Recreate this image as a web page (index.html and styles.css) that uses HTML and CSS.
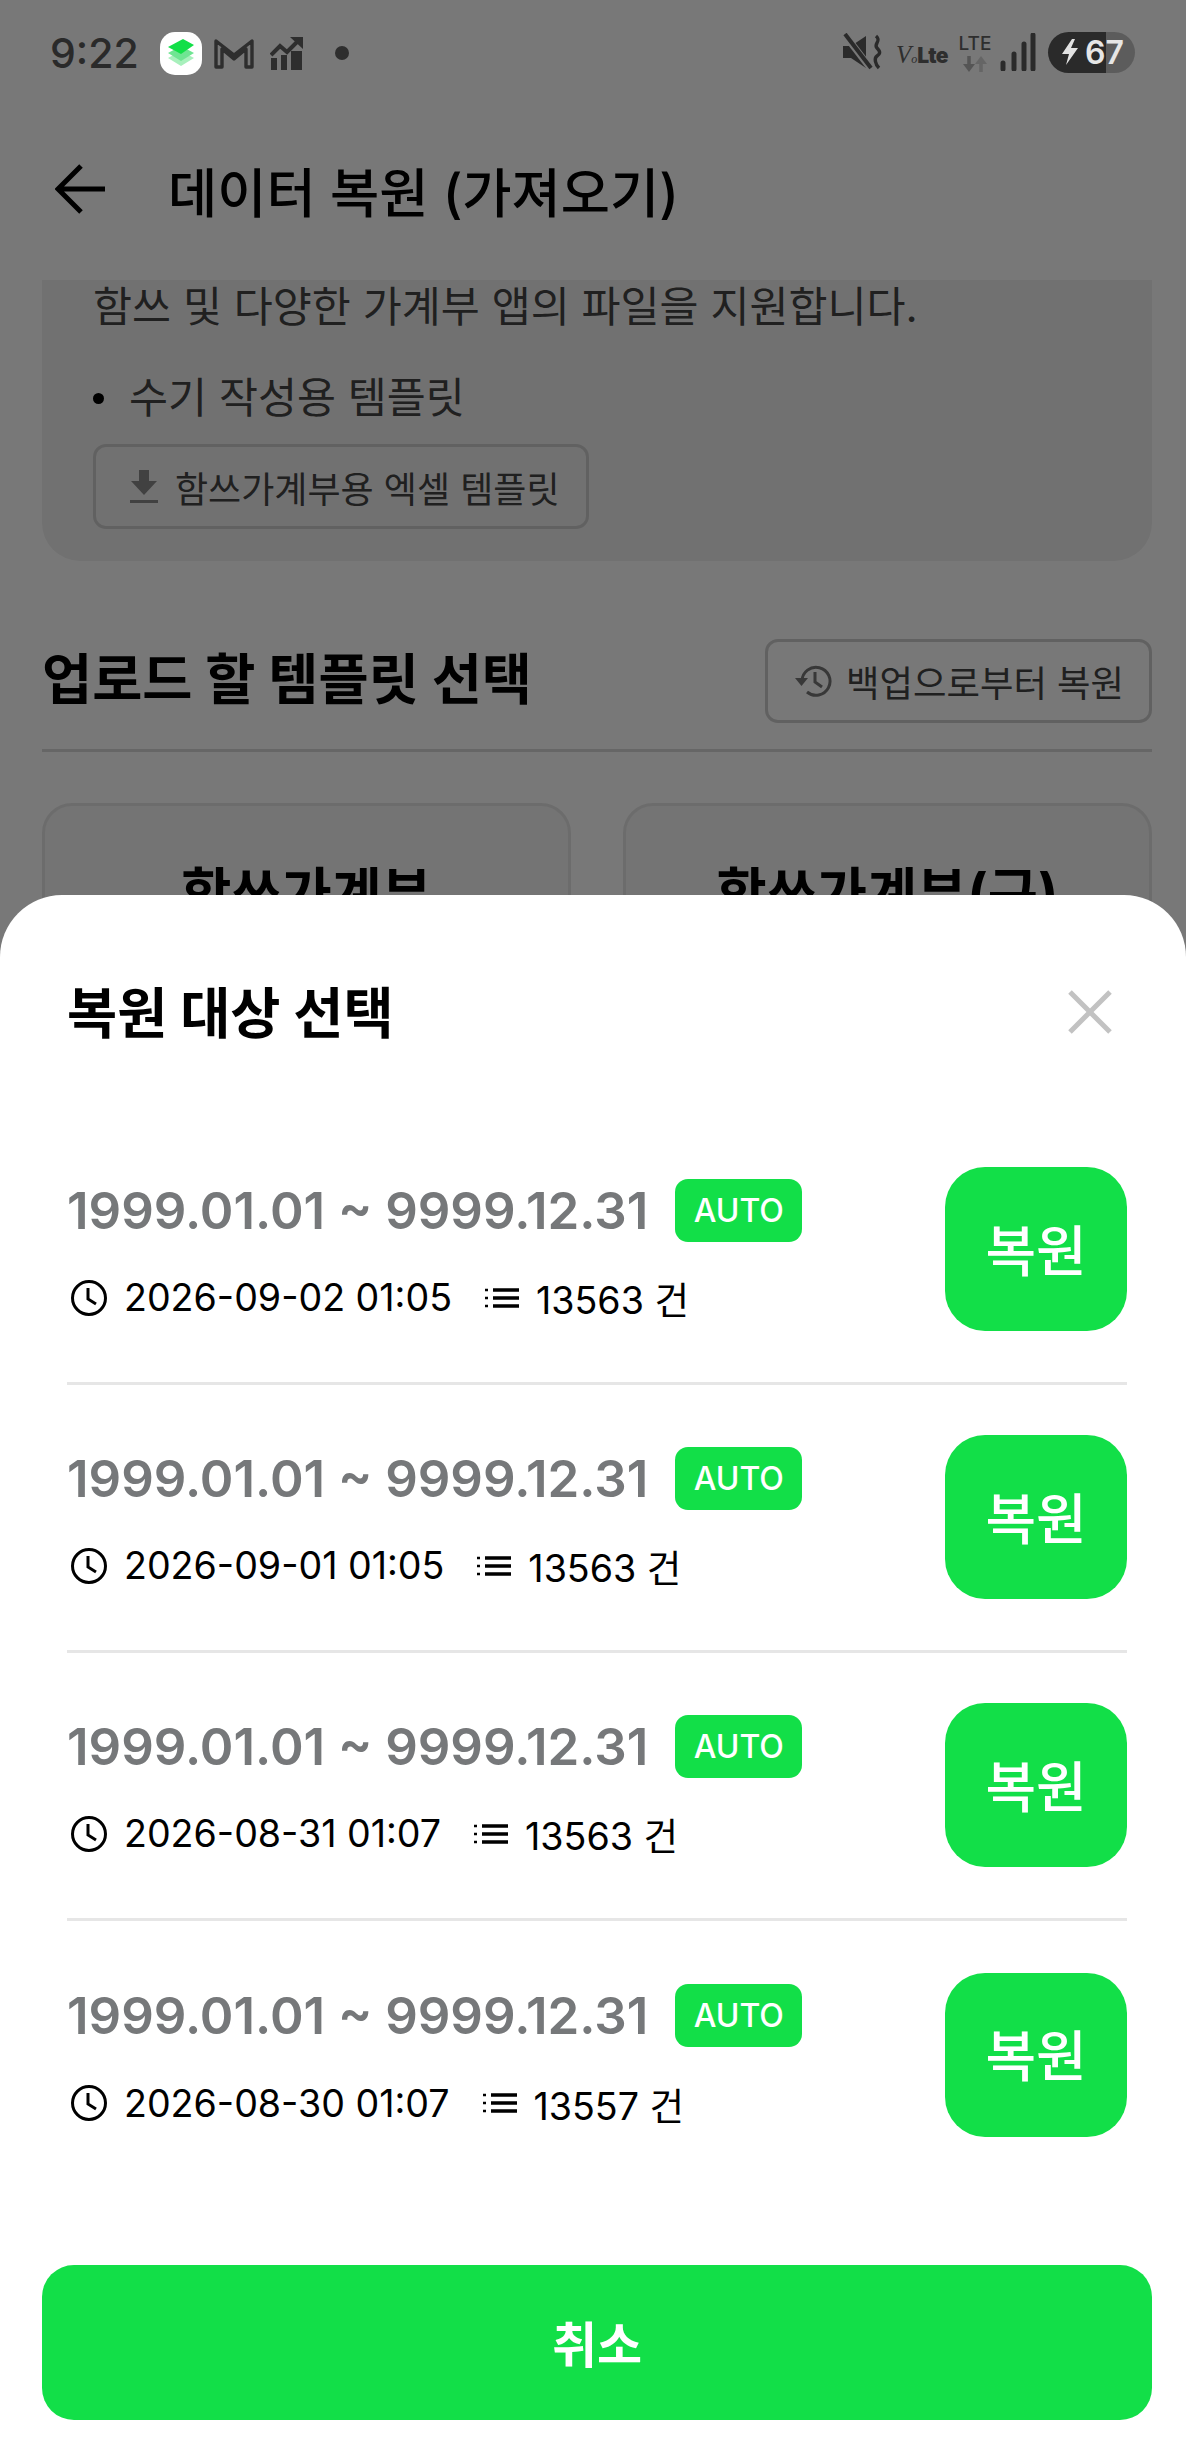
FILE: index.html
```html
<!DOCTYPE html>
<html>

<head>
  <meta charset="utf-8">
  <meta name="viewport" content="width=device-width">
  <title>데이터 복원 (가져오기)</title>
  <link rel="stylesheet" href="styles.css">
</head>

<body>
  <svg class="defs" width="0" height="0">
    <symbol id="clock" viewBox="0 0 38 38">
      <circle cx="19" cy="19" r="16.5" fill="none" stroke="#000" stroke-width="3"/>
      <path d="M18 9v11l8 5" fill="none" stroke="#000" stroke-width="3"/>
    </symbol>
    <symbol id="list" viewBox="0 0 34 20">
      <path d="M0 2h4M0 10h4M0 18h4" stroke="#000" stroke-width="2.600" stroke-dasharray="3 1" fill="none"/>
      <path d="M8 2h26M8 10h26M8 18h26" stroke="#000" stroke-width="3.400" fill="none"/>
    </symbol>
  </svg>

  <div class="screen">
    <div class="status">
      <div class="status-left">
        <span class="time">9:22</span>
        <span class="app-icon">
          <svg width="30" height="30" viewBox="0 0 30 30">
            <path d="M2 20l13-7 13 7-13 8z" fill="#a8f0bc"/>
            <path d="M2 15l13-7 13 7-13 8z" fill="#6fe592"/>
            <path d="M2 9l15-8 11 6-13 9z" fill="#12df48"/>
          </svg>
        </span>
        <svg class="gmail" width="40" height="32" viewBox="0 0 40 32">
          <path d="M2 30V4l18 14L38 4v26h-6V12L20 22 8 12v18z" fill="none" stroke="#2e2e2e" stroke-width="3.400" stroke-linejoin="round"/>
        </svg>
        <svg class="chart" width="34" height="34" viewBox="0 0 34 34">
          <path d="M1 34V22h6v12zM11 34V19h6v15zM21 34V15h11v19z" fill="#2e2e2e"/>
          <path d="M1 19l9-9 7 6L28 5" fill="none" stroke="#2e2e2e" stroke-width="4"/>
          <path d="M20 1h13v12z" fill="#2e2e2e"/>
        </svg>
        <span class="dot"></span>
      </div>
      <div class="status-right">
        <svg width="42" height="38" viewBox="0 0 42 38">
          <path d="M1 13h8L24 3v32L9 25H1z" fill="#2a2a2a"/>
          <path d="M3 2l26 34" stroke="#787878" stroke-width="7"/>
          <path d="M3 1l26 34" stroke="#2a2a2a" stroke-width="4"/>
          <path d="M34 3c6 5-3 8 1 12s3 6 0 8-2 8 2 12" fill="none" stroke="#2a2a2a" stroke-width="3.400"/>
        </svg>
        <span class="volte"><i>V<small>o</small></i><b>Lte</b></span>
        <span class="lte">
          <span class="lte-text">LTE</span>
          <svg width="28" height="16" viewBox="0 0 28 16">
            <path d="M8 0v9" stroke="#555" stroke-width="3.500"/>
            <path d="M2 8h12l-6 8z" fill="#555"/>
            <path d="M20 16V7" stroke="#656565" stroke-width="3.500"/>
            <path d="M14 8h12L20 0z" fill="#656565"/>
          </svg>
        </span>
        <svg class="signal" width="36" height="38" viewBox="0 0 36 38">
          <path d="M3 30v6M14 21v15M24 11v25M33 2v34" stroke="#2a2a2a" stroke-width="5" stroke-linecap="round" fill="none"/>
        </svg>
        <span class="battery">
          <svg width="18" height="26" viewBox="0 0 18 26"><path d="M11 0L1 15h7l-3 11L17 9h-7l4-9z" fill="#e2e2e2"/></svg>
          <span>67</span>
        </span>
      </div>
    </div>

    <header class="topbar">
      <svg width="52" height="52" viewBox="0 0 52 52">
        <path d="M50 26H5M26 3L3 26l23 23" fill="none" stroke="#000" stroke-width="5"/>
      </svg>
      <h1>데이터 복원 (가져오기)</h1>
    </header>

    <main class="content">
      <section class="info">
        <p class="info-line">함쓰 및 다양한 가계부 앱의 파일을 지원합니다.</p>
        <p class="bullet">수기 작성용 템플릿</p>
        <button class="outline template-btn">
          <svg width="30" height="34" viewBox="0 0 30 34">
            <path d="M10 0h10v11h8L15 25 2 11h8zM1 30h28v3H1z" fill="#8a8a8a"/>
          </svg>
          함쓰가계부용 엑셀 템플릿
        </button>
      </section>

      <div class="section-head">
        <h2>업로드 할 템플릿 선택</h2>
        <button class="outline backup-btn">
          <svg width="38" height="38" viewBox="0 0 38 38">
            <path d="M7 19a14 14 0 1 1 5 11" fill="none" stroke="#777" stroke-width="3"/>
            <path d="M0 16h13l-6.500 8z" fill="#777"/>
            <path d="M20 10v10l7 5" fill="none" stroke="#777" stroke-width="3"/>
          </svg>
          백업으로부터 복원
        </button>
      </div>

      <div class="cards">
        <div class="card">함쓰가계부</div>
        <div class="card">함쓰가계부(구)</div>
      </div>
    </main>

    <div class="overlay"></div>

    <div class="sheet">
      <div class="sheet-head">
        <h3>복원 대상 선택</h3>
        <svg width="46" height="46" viewBox="0 0 46 46">
          <path d="M3 3l40 40M43 3L3 43" stroke="#c2c2c2" stroke-width="5" fill="none"/>
        </svg>
      </div>

      <div class="row">
        <div class="row-info">
          <div class="range"><span>1999.01.01 ~ 9999.12.31</span><em>AUTO</em></div>
          <div class="meta">
            <svg class="clock-icon"><use href="#clock"/></svg>
            <span>2026-09-02 01:05</span>
            <svg class="list-icon"><use href="#list"/></svg>
            <span>13563 건</span>
          </div>
        </div>
        <button class="restore">복원</button>
      </div>

      <div class="row">
        <div class="row-info">
          <div class="range"><span>1999.01.01 ~ 9999.12.31</span><em>AUTO</em></div>
          <div class="meta">
            <svg class="clock-icon"><use href="#clock"/></svg>
            <span>2026-09-01 01:05</span>
            <svg class="list-icon"><use href="#list"/></svg>
            <span>13563 건</span>
          </div>
        </div>
        <button class="restore">복원</button>
      </div>

      <div class="row">
        <div class="row-info">
          <div class="range"><span>1999.01.01 ~ 9999.12.31</span><em>AUTO</em></div>
          <div class="meta">
            <svg class="clock-icon"><use href="#clock"/></svg>
            <span>2026-08-31 01:07</span>
            <svg class="list-icon"><use href="#list"/></svg>
            <span>13563 건</span>
          </div>
        </div>
        <button class="restore">복원</button>
      </div>

      <div class="row">
        <div class="row-info">
          <div class="range"><span>1999.01.01 ~ 9999.12.31</span><em>AUTO</em></div>
          <div class="meta">
            <svg class="clock-icon"><use href="#clock"/></svg>
            <span>2026-08-30 01:07</span>
            <svg class="list-icon"><use href="#list"/></svg>
            <span>13557 건</span>
          </div>
        </div>
        <button class="restore">복원</button>
      </div>

      <button class="cancel">취소</button>
    </div>
  </div>
</body>

</html>
```

FILE: styles.css
```css
* {
  box-sizing: border-box;
}

body {
  margin: 0;
  padding: 0;
  background-color: #fff;
  font-family: Inter, "Noto Sans CJK KR", sans-serif;
}

.defs {
  position: absolute;
}

.screen {
  position: relative;
  width: 1186px;
  height: 2454px;
  overflow: hidden;
  background-color: #fff;
}

/* status bar sits on top of the dim layer */
.status {
  position: relative;
  z-index: 2;
  height: 106px;
  padding: 31px 50px 0;
  display: flex;
  justify-content: space-between;
  align-items: flex-start;
}

.status-left {
  display: flex;
  align-items: center;
  height: 44px;
}

.time {
  font-size: 41px;
  font-weight: 500;
  color: #2a2a2a;
  width: 110px;
}

.app-icon {
  width: 42px;
  height: 43px;
  border-radius: 15px;
  background-color: #fff;
  display: flex;
  align-items: center;
  justify-content: center;
}

.gmail {
  margin-left: 12px;
}

.chart {
  margin-left: 16px;
}

.dot {
  width: 14px;
  height: 14px;
  border-radius: 50%;
  background-color: #2e2e2e;
  margin-left: 31px;
}

.status-right {
  display: flex;
  align-items: center;
  height: 44px;
  margin-right: 1px;
  margin-top: -1px;
}

.volte {
  width: 47px;
  margin-left: 12px;
  display: flex;
  align-items: baseline;
  color: #2e2e2e;
  font-size: 21px;
  line-height: 22px;
  margin-top: 10px;
}

.volte i {
  font-family: "Liberation Serif", serif;
  font-size: 25px;
}

.volte small {
  font-size: 12px;
}

.volte b {
  font-weight: 900;
  letter-spacing: -0.5px;
}

.lte {
  width: 36px;
  margin-left: 14px;
  display: flex;
  flex-direction: column;
  align-items: center;
  gap: 3px;
  margin-top: 2px;
}

.lte-text {
  font-size: 19px;
  line-height: 19px;
  font-weight: 500;
  color: #2e2e2e;
}

.signal {
  margin-left: 7px;
}

.battery {
  width: 87px;
  height: 41px;
  margin-left: 12px;
  border-radius: 21px;
  background: linear-gradient(to right, #2a2a2a 67%, #5c5c5c 67%);
  display: flex;
  align-items: center;
  padding-left: 13px;
  gap: 6px;
  font-size: 32px;
  font-weight: 600;
  color: #e6e6e6;
}

.topbar {
  height: 174px;
  padding: 0 0 8px 55px;
  display: flex;
  align-items: center;
  gap: 61px;
}

.topbar h1 {
  margin: 0;
  font-size: 53.500px;
  font-weight: 500;
  color: #000;
}

.content {
  padding: 0 34px 0 42px;
}

.info {
  background-color: #f1f1f1;
  border-radius: 0 0 38px 38px;
  height: 281px;
  padding: 0 52px 0 51px;
  color: #333;
}

.info-line {
  margin: 0;
  font-size: 42.400px;
  line-height: 54px;
  color: #444;
}

.bullet {
  margin: 37px 0 0;
  font-size: 42.400px;
  line-height: 54px;
  color: #444;
  display: flex;
  align-items: center;
  gap: 25px;
}

.bullet::before {
  content: "";
  width: 11px;
  height: 11px;
  border-radius: 50%;
  background-color: #000;
}

.outline {
  font-family: inherit;
  border: 3px solid #cfcfcf;
  border-radius: 13px;
  background-color: transparent;
  display: flex;
  align-items: center;
  color: #444;
  padding: 0;
}

.template-btn {
  margin-top: 19px;
  width: 496px;
  height: 85px;
  padding-left: 33px;
  gap: 16px;
  font-size: 36px;
}

.section-head {
  display: flex;
  align-items: center;
  justify-content: space-between;
  margin-top: 77px;
  height: 85px;
}

.section-head h2 {
  margin: 0 0 10px;
  font-size: 54.500px;
  font-weight: 700;
  color: #000;
}

.backup-btn {
  width: 387px;
  height: 84px;
  padding-left: 27px;
  gap: 13px;
  font-size: 36.400px;
}

.cards {
  border-top: 3px solid #d8d8d8;
  margin-top: 26px;
  padding-top: 51px;
  display: grid;
  grid-template-columns: 529px 529px;
  gap: 52px;
}

.card {
  height: 300px;
  border: 3px solid #e6e6e6;
  border-radius: 30px;
  background-color: #f6f6f6;
  padding-top: 44px;
  text-align: center;
  font-size: 54.500px;
  font-weight: 700;
  color: #000;
}

.overlay {
  position: absolute;
  top: 0;
  left: 0;
  right: 0;
  bottom: 0;
  background-color: rgba(0, 0, 0, 0.53);
}

.sheet {
  position: absolute;
  z-index: 3;
  left: 0;
  right: 0;
  top: 895px;
  bottom: 0;
  background-color: #fff;
  border-radius: 62px 62px 0 0;
  padding: 0 59px 0 67px;
}

.sheet-head {
  display: flex;
  justify-content: space-between;
  align-items: center;
  height: 234px;
  padding-right: 14px;
  margin-bottom: -12px;
}

.sheet-head h3 {
  margin: 0 0 6px;
  font-size: 54.500px;
  font-weight: 700;
  color: #000;
}

.row {
  display: flex;
  align-items: center;
  justify-content: space-between;
  height: 268px;
  padding-bottom: 1px;
  border-bottom: 3px solid #e6e6e6;
}

.row:nth-of-type(5) {
  border-bottom: none;
}

.row-info {
  display: flex;
  flex-direction: column;
  gap: 36px;
  margin-top: -2px;
}

.range {
  display: flex;
  align-items: center;
  gap: 27px;
  height: 63px;
}

.range span {
  font-size: 51px;
  font-weight: 600;
  color: #76787a;
}

.range em {
  width: 127px;
  height: 63px;
  border-radius: 13px;
  background-color: #12df48;
  color: #fff;
  font-style: normal;
  font-size: 32px;
  font-weight: 500;
  display: flex;
  align-items: center;
  justify-content: center;
}

.meta {
  display: flex;
  align-items: center;
  font-size: 37.600px;
  color: #000;
  height: 40px;
}

.clock-icon {
  width: 38px;
  height: 38px;
  margin: 0 16px 0 3px;
}

.list-icon {
  width: 34px;
  height: 20px;
  margin: 0 17px 0 33px;
}

.restore {
  width: 182px;
  height: 164px;
  border: none;
  border-radius: 40px;
  background-color: #12df48;
  color: #fff;
  font-family: inherit;
  font-size: 55px;
  font-weight: 500;
  padding: 0 0 5px;
}

.cancel {
  display: block;
  width: 1110px;
  height: 155px;
  margin: 76px 0 0 -25px;
  border: none;
  border-radius: 32px;
  background-color: #12df48;
  color: #fff;
  font-family: inherit;
  font-size: 49px;
  font-weight: 700;
  padding: 0 0 3px;
}
```
